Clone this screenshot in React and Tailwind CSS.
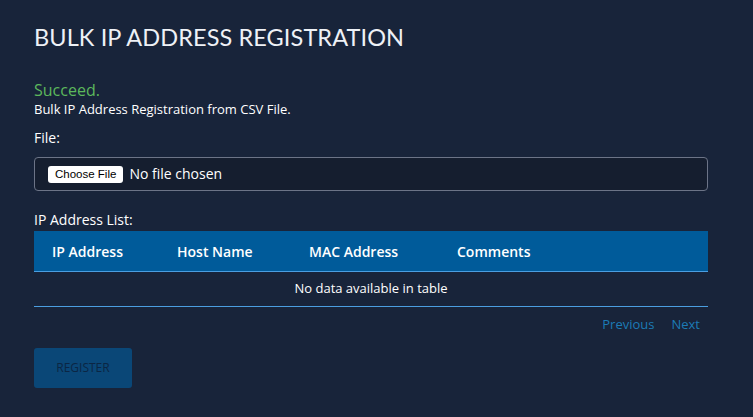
import React from "react";

const columns = ["IP Address", "Host Name", "MAC Address", "Comments"];
const colWidths = ["w-[125px]", "w-[132px]", "w-[148px]", "flex-1"];

export default function App() {
  return (
    <div className="min-h-[417px] w-full bg-[#18243a] pl-[34px] pr-[45px] pt-[22px] pb-[29px] text-white [font-family:'Open_Sans',sans-serif]">
      <h1 className="text-[23.5px] leading-[30px] font-normal text-[#eef1f6] [font-family:Lato,sans-serif] tracking-[0.1px]">
        BULK IP ADDRESS REGISTRATION
      </h1>

      <div className="mt-[28px]">
        <div className="text-[16px] leading-[20px] text-[#5cb85c]">Succeed.</div>
        <div className="text-[13px] leading-[18px] text-white">
          Bulk IP Address Registration from CSV File.
        </div>
      </div>

      <div className="mt-[10px] text-[14px] leading-[20px]">File:</div>
      <div className="mt-[9px] flex h-[34px] items-center rounded border border-[#6c7487] bg-[#151e2f] pl-[13px]">
        <span className="rounded-[3px] bg-white px-[7px] text-[11.5px] leading-[17px] text-black [font-family:'Liberation_Sans',Arial,sans-serif]">
          Choose File
        </span>
        <span className="ml-[6px] text-[14px] leading-[18px] text-white">No file chosen</span>
      </div>

      <div className="mt-[19px] text-[14px] leading-[20px]">IP Address List:</div>
      <div className="mt-[1px]">
        <div className="flex h-[41px] items-center border-b border-[#4b9ee0] bg-[#005b9a] pl-[18px] text-[14px] font-semibold">
          {columns.map((c, i) => (
            <div key={c} className={colWidths[i]}>
              {c}
            </div>
          ))}
        </div>
        <div className="flex h-[35px] items-center justify-center border-b border-[#4b9ee0] text-[13px]">
          No data available in table
        </div>
      </div>

      <div className="mt-[8px] flex justify-end gap-[17px] pr-[8px] text-[13px] leading-[18px] text-[#1c7bb6]">
        <span>Previous</span>
        <span>Next</span>
      </div>

      <button className="mt-[15px] h-[40px] w-[98px] rounded-[3px] bg-[#0a4777] text-[12px] text-[#0b2644]">
        REGISTER
      </button>
    </div>
  );
}
